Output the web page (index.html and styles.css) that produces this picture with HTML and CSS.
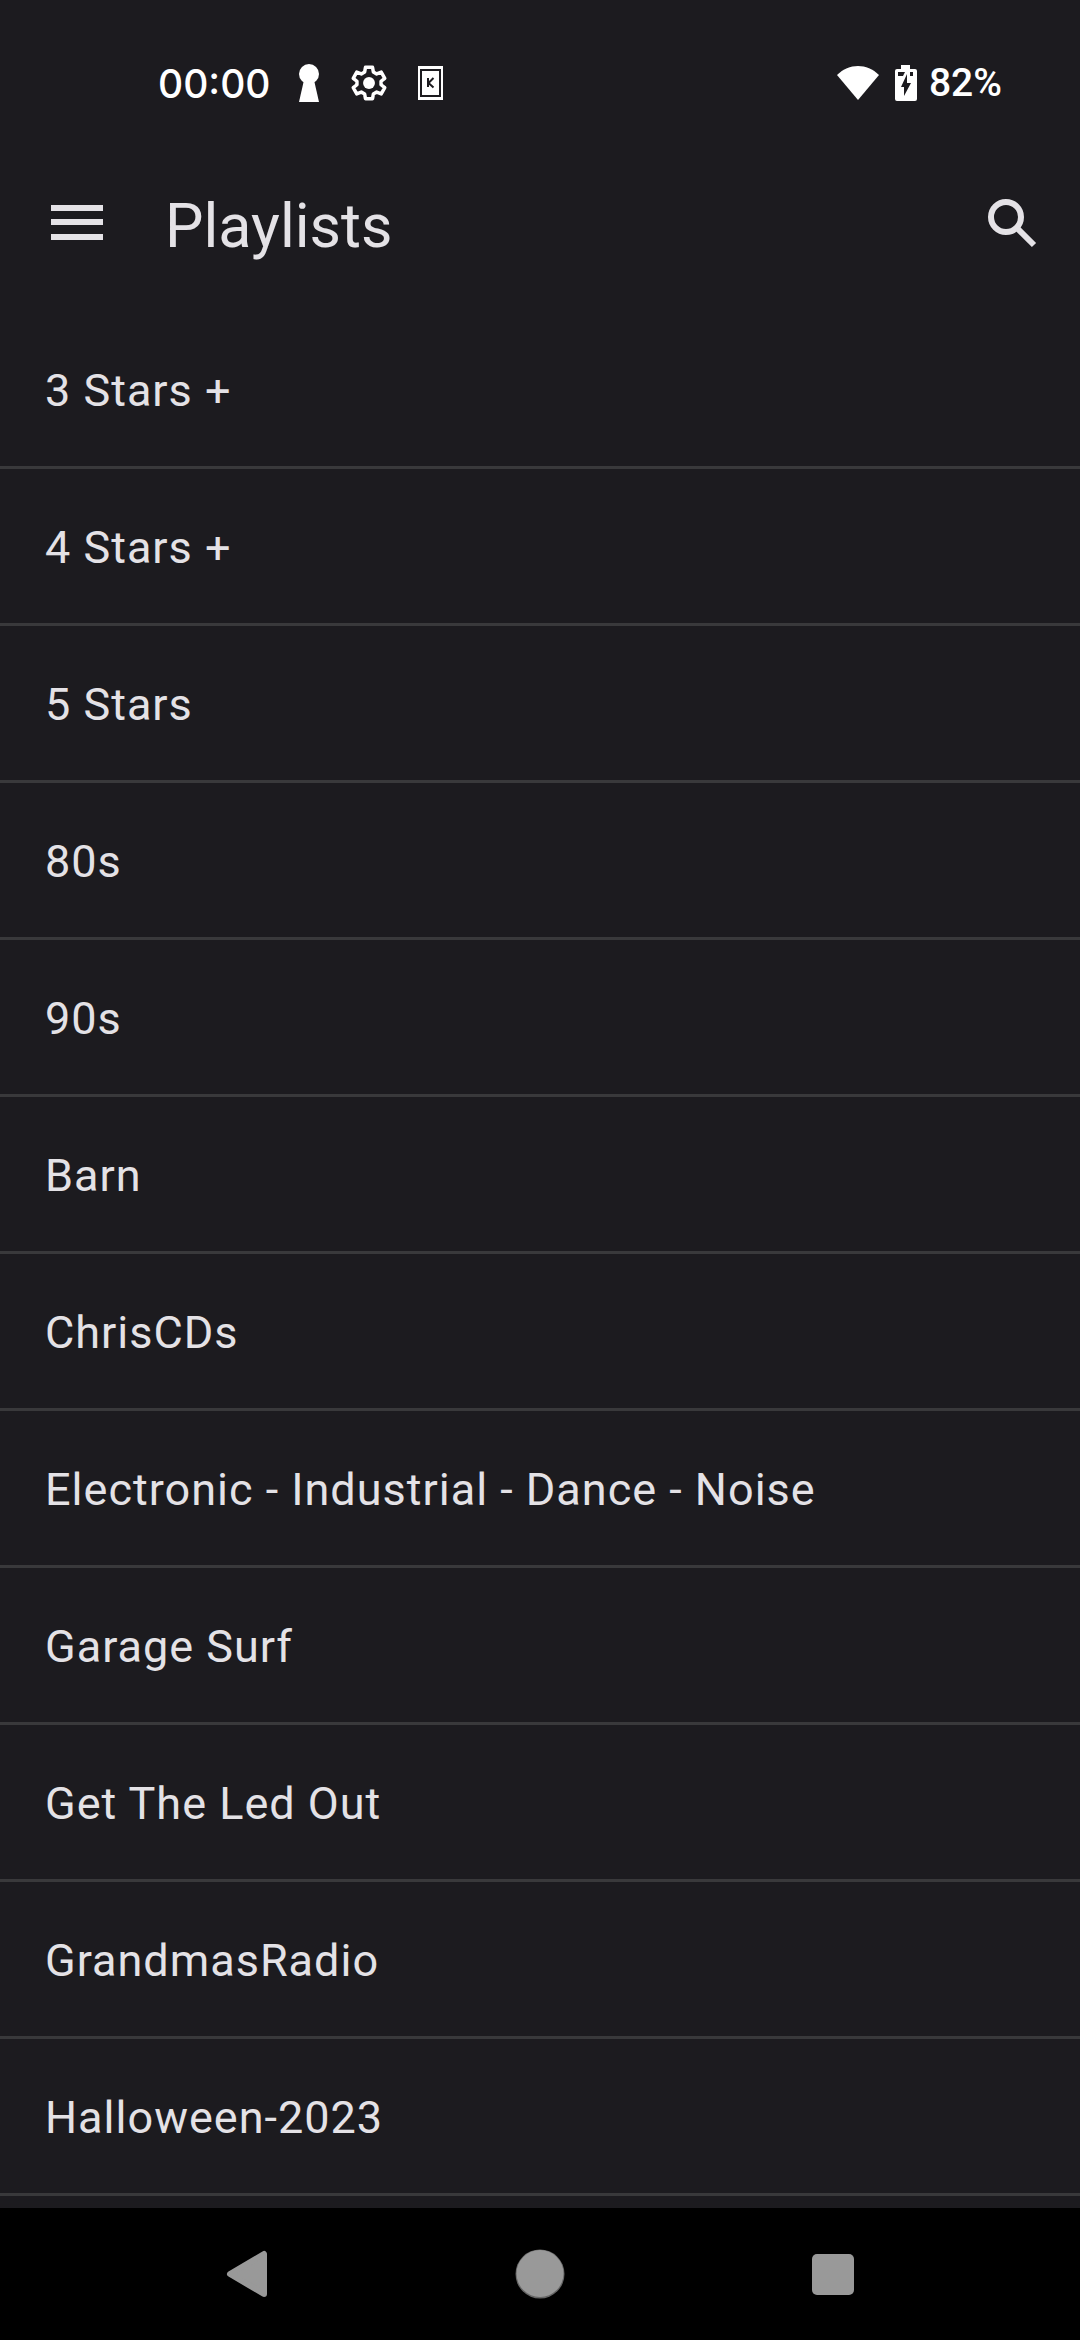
FILE: index.html
```html
<!DOCTYPE html>
<html lang="en">
<head>
  <meta charset="UTF-8">
  <meta name="viewport" content="width=device-width, initial-scale=1">
  <title>Playlists</title>
  <link rel="stylesheet" href="styles.css">
</head>
<body>

  <div class="status-bar">
    <span class="clock">00:00</span>
    <div class="notifications">
      <!-- keyhole -->
      <svg width="22" height="38" viewBox="0 0 22 38" fill="#fff"><circle cx="11" cy="10" r="10"/><path d="M6 16h10l5 22H1z"/></svg>
      <!-- settings -->
      <svg width="42" height="42" viewBox="0 0 24 24"><path d="M10 3h4l.5 2.700 1.900 1.100 2.600-1 2 3.500-2.100 1.700v2l2.100 1.700-2 3.500-2.600-1-1.900 1.100L14 21h-4l-.5-2.700-1.900-1.100-2.600 1-2-3.500L5.100 13v-2L3 9.300l2-3.500 2.600 1 1.900-1.100z" fill="none" stroke="#fff" stroke-width="2" stroke-linejoin="round"/><circle cx="12" cy="12" r="3.400" fill="#fff"/></svg>
      <!-- card -->
      <svg width="25" height="34" viewBox="0 0 25 34"><path fill="#fff" d="M0 0h25v34H0z"/><path fill="none" stroke="#1c1b1f" stroke-width="2" d="M3 4h19v26H3z"/><path fill="none" stroke="#1c1b1f" stroke-width="2" d="M10 12v9M15.500 12l-5 5 5 4.500"/></svg>
    </div>
    <div class="system">
      <!-- wifi -->
      <svg width="42" height="36" viewBox="0 0 42 36" fill="#fff"><path d="M0 10C12-2 30-2 42 10L21 35z"/></svg>
      <!-- battery -->
      <svg width="22" height="36" viewBox="0 0 22 36"><path fill="#fff" d="M6 0h9v4h5q2 0 2 2v28q0 2-2 2H2q-2 0-2-2V6q0-2 2-2h4z"/><path fill="#1c1b1f" d="M3 7h7l-2 4H3zM15 7h3v4h-3zM12 9v9h4L9 31v-9H6z"/></svg>
      <span>82%</span>
    </div>
  </div>

  <header class="app-bar">
    <button class="icon-btn" aria-label="Menu">
      <svg width="68" height="68" viewBox="0 0 68 68" fill="#e4e2e6"><path d="M8 13h52v6H8zM8 27h52v6H8zM8 42h52v6H8z"/></svg>
    </button>
    <h1>Playlists</h1>
    <button class="icon-btn" aria-label="Search">
      <svg width="68" height="68" viewBox="0 0 68 68" fill="none" stroke="#e4e2e6"><circle cx="26" cy="25" r="15" stroke-width="6"/><path d="M38 37l16 16" stroke-width="6"/></svg>
    </button>
  </header>

  <main>
    <ul class="playlists">
      <li><a href="#">3 Stars +</a></li>
      <li><a href="#">4 Stars +</a></li>
      <li><a href="#">5 Stars</a></li>
      <li><a href="#">80s</a></li>
      <li><a href="#">90s</a></li>
      <li><a href="#">Barn</a></li>
      <li><a href="#">ChrisCDs</a></li>
      <li><a href="#">Electronic - Industrial - Dance - Noise</a></li>
      <li><a href="#">Garage Surf</a></li>
      <li><a href="#">Get The Led Out</a></li>
      <li><a href="#">GrandmasRadio</a></li>
      <li><a href="#">Halloween-2023</a></li>
    </ul>
  </main>

  <nav class="nav-bar">
    <button aria-label="Back">
      <svg width="50" height="50" viewBox="0 0 50 50"><path d="M8 25L42 5v40z" fill="#999" stroke="#999" stroke-width="6" stroke-linejoin="round"/></svg>
    </button>
    <button aria-label="Home">
      <svg width="50" height="50" viewBox="0 0 50 50"><circle cx="25" cy="25" r="24.500" fill="#666"/><circle cx="25" cy="24.500" r="23.500" fill="#999"/></svg>
    </button>
    <button aria-label="Recent apps">
      <svg width="50" height="50" viewBox="0 0 50 50"><rect x="4" y="5" width="42" height="41" rx="5" fill="#999"/></svg>
    </button>
  </nav>

</body>
</html>
```

FILE: styles.css
```css
* {
  box-sizing: border-box;
}

body {
  background-color: #1c1b1f;
  color: #e4e2e6;
  font-family: Roboto, sans-serif;
  margin: 0;
  min-height: 100vh;
  display: flex;
  flex-direction: column;
}

svg {
  display: block;
}

button {
  background: none;
  border: none;
  padding: 0;
  cursor: pointer;
}

.status-bar {
  display: flex;
  align-items: center;
  height: 132px;
  padding: 34px 78px 0 158px;
  color: white;
  font-size: 39px;
  font-weight: 500;
}

.clock {
  font-family: Inter, sans-serif;
}

.notifications {
  display: flex;
  align-items: center;
  gap: 28px;
  margin-left: 27px;
}

.system {
  display: flex;
  align-items: center;
  gap: 16px;
  margin-left: auto;
}

.system span {
  margin-left: -4px;
}

.app-bar {
  display: flex;
  align-items: center;
  height: 180px;
  padding: 8px 32px 0 43px;
}

h1 {
  flex: 1;
  margin: 0 0 0 54px;
  font-size: 61px;
  font-weight: 400;
}

main {
  flex: 1;
}

.playlists {
  list-style: none;
  margin: 0;
  padding: 0;
}

.playlists li {
  border-bottom: 3px solid #39393b;
}

.playlists a {
  display: block;
  padding: 4px 45px 0;
  color: inherit;
  font-size: 45px;
  line-height: 150px;
  letter-spacing: 1px;
  text-decoration: none;
}

.nav-bar {
  display: grid;
  grid-template-columns: repeat(3, 1fr);
  align-items: center;
  justify-items: center;
  height: 132px;
  padding: 0 100px;
  background-color: black;
}
```
